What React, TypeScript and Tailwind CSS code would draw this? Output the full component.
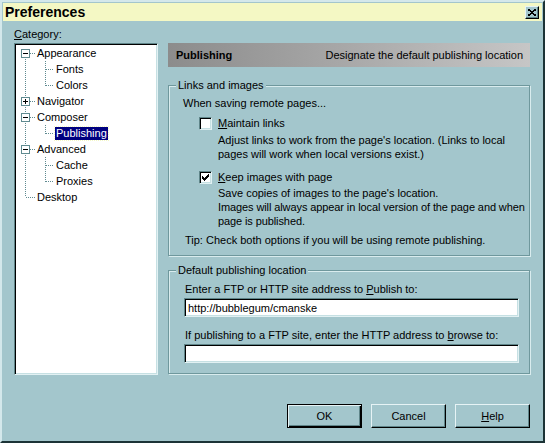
import type { ReactNode } from 'react'

// ── Tree data ─────────────────────────────────

type Node = {
  label: string
  level: 0 | 1
  box?: 'minus' | 'plus'
  lastChild?: boolean
  last?: boolean
  first?: boolean
  selected?: boolean
}

const tree: Node[] = [
  { label: 'Appearance', level: 0, box: 'minus', first: true },
  { label: 'Fonts', level: 1 },
  { label: 'Colors', level: 1, lastChild: true },
  { label: 'Navigator', level: 0, box: 'plus' },
  { label: 'Composer', level: 0, box: 'minus' },
  { label: 'Publishing', level: 1, lastChild: true, selected: true },
  { label: 'Advanced', level: 0, box: 'minus' },
  { label: 'Cache', level: 1 },
  { label: 'Proxies', level: 1, lastChild: true },
  { label: 'Desktop', level: 0, last: true },
]

const dot = '#5f8a90'

function Connector({ node }: { node: Node }): ReactNode {
  const w = node.level === 0 ? 20 : 39
  const trunkTop = node.first ? 12 : 0
  const trunkBottom = node.last ? 8 : 16
  return (
    <svg width={w} height={16} shapeRendering="crispEdges" className="shrink-0">
      <line x1={9.5} y1={trunkTop} x2={9.5} y2={trunkBottom} stroke={dot} strokeDasharray="1 1" />
      {node.level === 1 && (
        <>
          <line x1={29.5} y1={0} x2={29.5} y2={node.lastChild ? 9 : 16} stroke={dot} strokeDasharray="1 1" />
          <line x1={30} y1={8.5} x2={38} y2={8.5} stroke={dot} strokeDasharray="1 1" />
        </>
      )}
      {node.level === 0 && !node.box && (
        <line x1={10} y1={8.5} x2={19} y2={8.5} stroke={dot} strokeDasharray="1 1" />
      )}
      {node.box && (
        <>
          <line x1={14} y1={8.5} x2={19} y2={8.5} stroke={dot} strokeDasharray="1 1" />
          <rect x={5.5} y={4.5} width={8} height={8} fill="#fff" stroke="#5f8a90" />
          <line x1={7} y1={8.5} x2={12} y2={8.5} stroke="#000" />
          {node.box === 'plus' && <line x1={9.5} y1={6} x2={9.5} y2={11} stroke="#000" />}
        </>
      )}
    </svg>
  )
}

// ── Small controls ────────────────────────────

function Checkbox({ checked }: { checked?: boolean }): ReactNode {
  return (
    <span className="w-[13px] h-[13px] shrink-0 bg-white border border-t-[#5f8589] border-l-[#5f8589] border-r-[#e2f1f3] border-b-[#e2f1f3] shadow-[inset_1px_1px_0_#000,inset_-1px_-1px_0_#c6e0e3] flex items-center justify-center">
      {checked && (
        <svg width={7} height={7} shapeRendering="crispEdges">
          <path
            d="M6 0h1v1h-1z M5 1h2v1h-2z M0 2h1v1h-1z M4 2h3v1h-3z M0 3h2v1h-2z M3 3h3v1h-3z M0 4h5v1h-5z M1 5h3v1h-3z M2 6h1v1h-1z"
            fill="#000"
          />
        </svg>
      )}
    </span>
  )
}

function TextField({ value }: { value?: string }): ReactNode {
  return (
    <div className="w-[335px] h-[19px] bg-white border border-t-[#5f8589] border-l-[#5f8589] border-r-[#e2f1f3] border-b-[#e2f1f3] shadow-[inset_1px_1px_0_#000,inset_-1px_-1px_0_#c6e0e3] pl-[3px] flex items-center text-[11px] text-black">
      {value}
    </div>
  )
}

function Button({ children, isDefault }: { children: ReactNode; isDefault?: boolean }): ReactNode {
  return (
    <button
      type="button"
      className={
        isDefault
          ? 'w-[75px] h-[24px] border border-black shadow-[inset_1px_1px_0_#e6f3f5,inset_-1px_-1px_0_#000,inset_-2px_-2px_0_#5f8589] text-[11px] text-black'
          : 'w-[75px] h-[24px] border border-t-[#e6f3f5] border-l-[#e6f3f5] border-r-black border-b-black shadow-[inset_-1px_-1px_0_#5f8589] text-[11px] text-black'
      }
    >
      {children}
    </button>
  )
}

function GroupBox({ title, children, className }: { title: string; children: ReactNode; className?: string }): ReactNode {
  return (
    <fieldset
      className={`border border-[#6f989d] shadow-[inset_1px_1px_0_#d9ecee,1px_1px_0_#d9ecee] ${className ?? ''}`}
    >
      <legend className="ml-[7px] px-[2px] leading-[13px] bg-[#a3c6cc] text-[11px]">{title}</legend>
      {children}
    </fieldset>
  )
}

// ── Main export ───────────────────────────────

export default function App(): ReactNode {
  return (
    <div
      className="w-[545px] h-[443px] bg-[#a3c6cc] border-2 border-t-[#d4e8eb] border-l-[#d4e8eb] border-r-[#1c3336] border-b-[#1c3336] p-[1px] flex flex-col text-black overflow-hidden"
      style={{ fontFamily: '"Liberation Sans", Arial, sans-serif' }}
    >
      {/* title bar */}
      <div className="h-[18px] bg-[#f4f8c4] flex items-center justify-between pl-[2px] pr-[3px]">
        <span className="text-[14px] font-bold leading-none">Preferences</span>
        <span className="w-[14px] h-[13px] bg-[#a3c6cc] border border-t-[#e6f3f5] border-l-[#e6f3f5] border-r-black border-b-black shadow-[inset_-1px_-1px_0_#5f8589] flex items-center justify-center">
          <svg width={8} height={7} shapeRendering="crispEdges">
            <path d="M0 0l4 3.5l4-3.5M0 7l4-3.5l4 3.5" stroke="#000" strokeWidth={1.6} fill="none" />
          </svg>
        </span>
      </div>

      {/* body */}
      <div className="flex pl-[11px] gap-[10px]">
        <div className="flex flex-col w-[144px]">
          <span className="mt-[7px] mb-[2px] text-[11px] leading-[13px]">
            <u>C</u>ategory:
          </span>
          <div className="h-[332px] bg-white border border-t-[#5f8589] border-l-[#5f8589] border-r-[#e2f1f3] border-b-[#e2f1f3] shadow-[inset_1px_1px_0_#000,inset_-1px_-1px_0_#c6e0e3] pt-[1px] pl-[1px]">
            {tree.map((n) => (
              <div key={n.label} className="flex h-[16px] items-center">
                <Connector node={n} />
                <span
                  className={
                    n.selected
                      ? 'text-[11px] leading-[13px] px-[1px] bg-[#000080] text-white outline-1 outline-dotted outline-[#f4f8c4]'
                      : 'text-[11px] leading-[13px] px-[1px]'
                  }
                >
                  {n.label}
                </span>
              </div>
            ))}
          </div>
        </div>

        <div className="flex flex-col w-[362px] pt-[22px]">
          <div className="h-[24px] bg-gradient-to-r from-[#8c8c8c] to-[#c6c6c6] flex items-center justify-between pl-[8px] pr-[7px] text-[11px]">
            <span className="font-bold">Publishing</span>
            <span>Designate the default publishing location</span>
          </div>

          <GroupBox title="Links and images" className="mt-[12px]">
            <div className="pl-[14px] pt-[4px] pb-[8px] text-[11px] leading-[14px]">
              <p>When saving remote pages...</p>
              <div className="mt-[6px] pl-[16px] flex items-center gap-[6px]">
                <Checkbox />
                <span>
                  <u>M</u>aintain links
                </span>
              </div>
              <p className="mt-[3px] pl-[35px] pr-[10px]">
                Adjust links to work from the page's location. (Links to local pages will work when local versions
                exist.)
              </p>
              <div className="mt-[9px] pl-[16px] flex items-center gap-[6px]">
                <Checkbox checked />
                <span>
                  <u>K</u>eep images with page
                </span>
              </div>
              <p className="mt-[2px] pl-[35px]">Save copies of images to the page's location.</p>
              <p className="pl-[35px] tracking-[-0.1px]">
                Images will always appear in local version of the page and when page is published.
              </p>
              <p className="mt-[5px] pl-[2px]">Tip: Check both options if you will be using remote publishing.</p>
            </div>
          </GroupBox>

          <GroupBox title="Default publishing location" className="mt-[8px]">
            <div className="pl-[15px] pt-[5px] pb-[10px] text-[11px] leading-[14px]">
              <p className="pl-[1px]">
                Enter a FTP or HTTP site address to <u>P</u>ublish to:
              </p>
              <div className="mt-[2px]">
                <TextField value="http://bubblegum/cmanske" />
              </div>
              <p className="mt-[11px] pl-[1px]">
                If publishing to a FTP site, enter the HTTP address to <u>b</u>rowse to:
              </p>
              <div className="mt-[2px]">
                <TextField />
              </div>
            </div>
          </GroupBox>
        </div>
      </div>

      {/* footer */}
      <div className="mt-auto mb-[12px] flex justify-end gap-[9px] pr-[12px]">
        <Button isDefault>OK</Button>
        <Button>Cancel</Button>
        <Button>
          <u>H</u>elp
        </Button>
      </div>
    </div>
  )
}
